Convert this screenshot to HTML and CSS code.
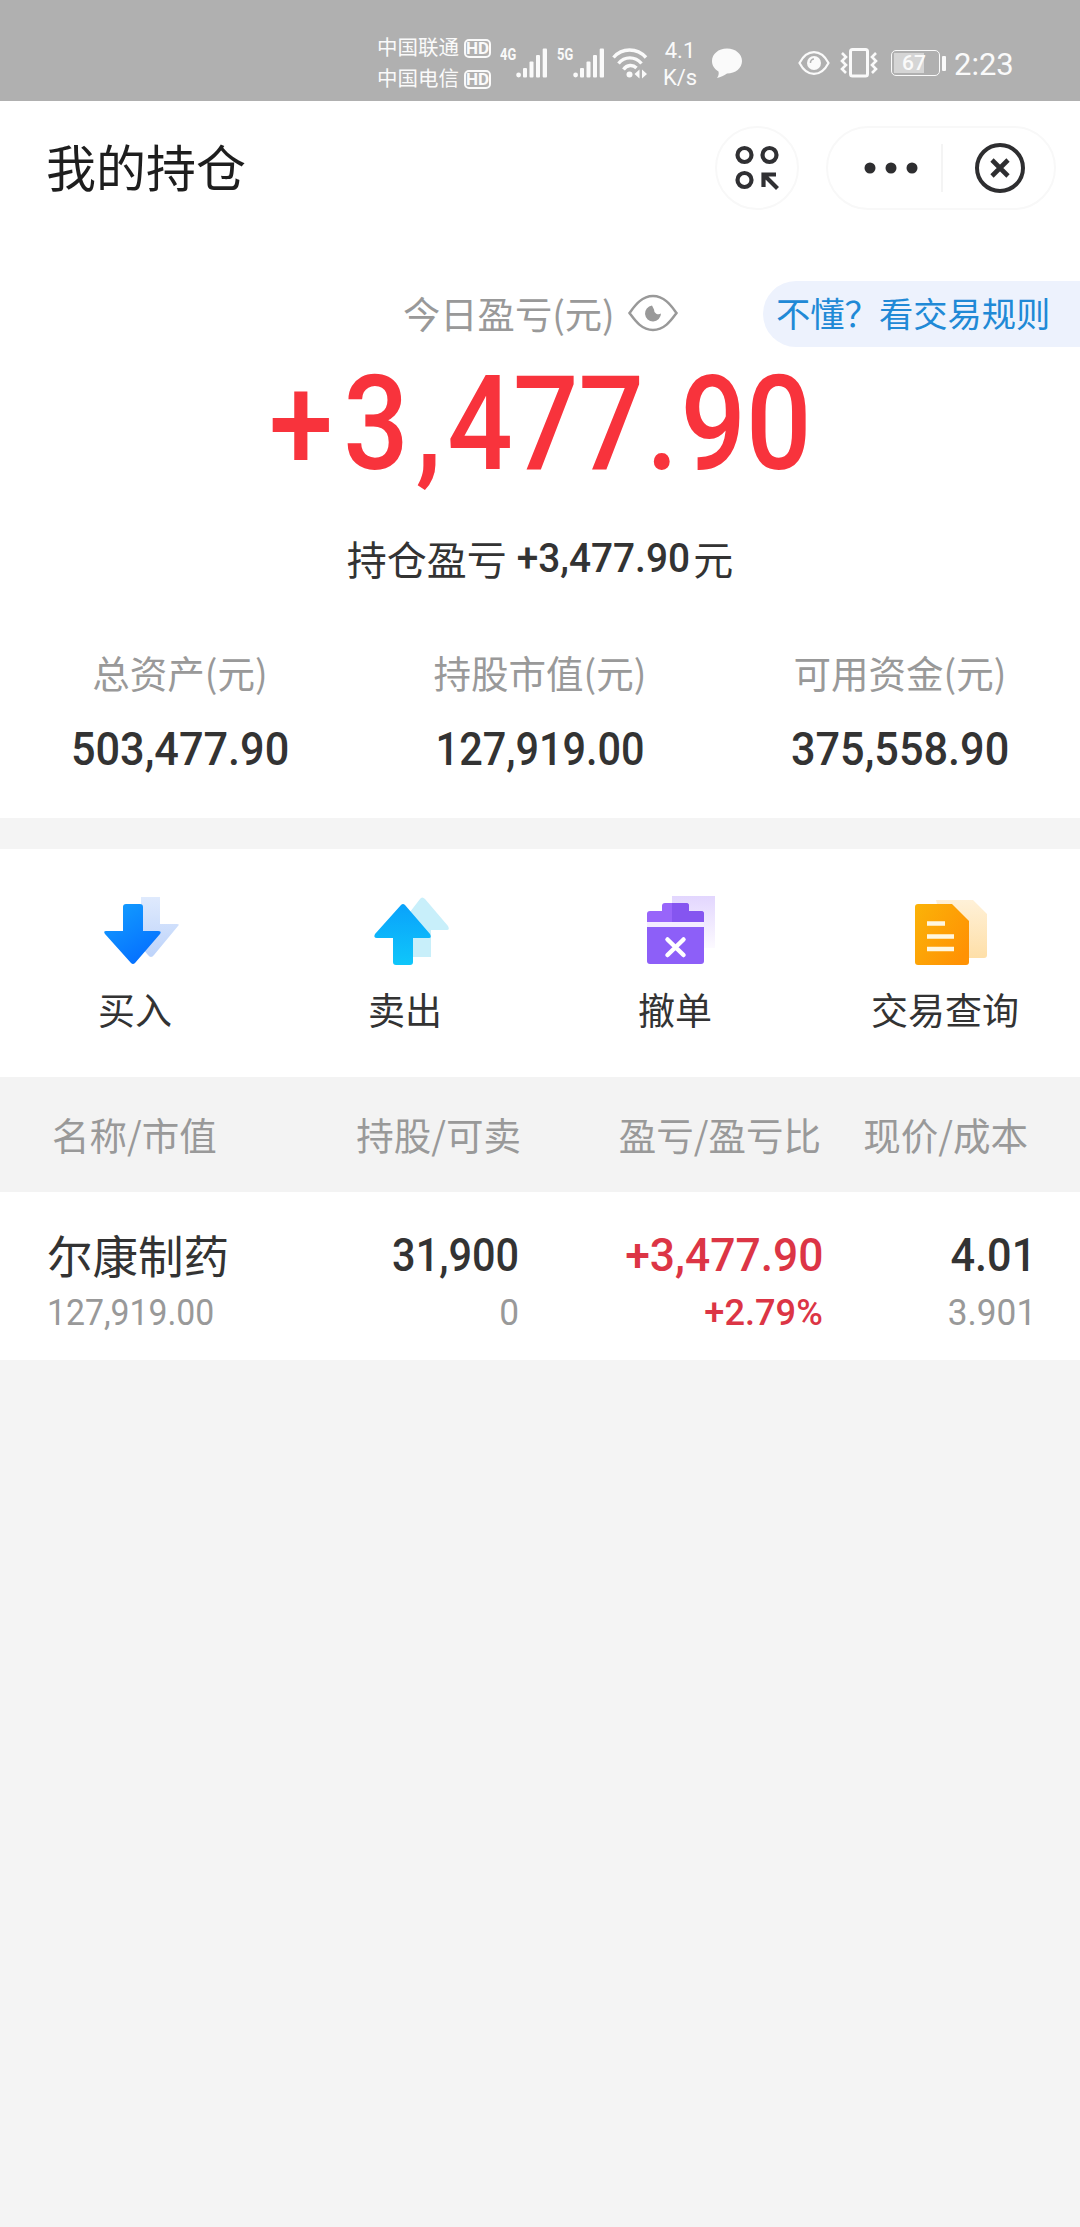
FILE: index.html
```html
<!DOCTYPE html>
<html lang="zh-CN">
<head>
<meta charset="utf-8">
<title>我的持仓</title>
<link rel="stylesheet" href="styles.css">
</head>
<body>
<div class="status">
  <div class="carriers">
    <div class="carrier"><span>中国联通</span><b class="hd">HD</b></div>
    <div class="carrier"><span>中国电信</span><b class="hd">HD</b></div>
  </div>
  <div class="signal">
    <span class="gen">4G</span>
    <svg width="32" height="30" viewBox="0 0 32 30" fill="#fafafa"><circle cx="2.6" cy="27" r="2.4"/><rect x="7" y="20" width="4" height="9.5" rx="1"/><rect x="13.500" y="13.500" width="4" height="16" rx="1"/><rect x="20" y="7" width="4" height="22.500" rx="1"/><rect x="26.700" y="0.500" width="4.300" height="29" rx="1"/></svg>
  </div>
  <div class="signal second">
    <span class="gen">5G</span>
    <svg width="32" height="30" viewBox="0 0 32 30" fill="#fafafa"><circle cx="2.6" cy="27" r="2.4"/><rect x="7" y="20" width="4" height="9.5" rx="1"/><rect x="13.500" y="13.500" width="4" height="16" rx="1"/><rect x="20" y="7" width="4" height="22.500" rx="1"/><rect x="26.700" y="0.500" width="4.300" height="29" rx="1"/></svg>
  </div>
  <svg class="wifi" width="37" height="30" viewBox="0 0 37 30" fill="none" stroke="#fafafa" stroke-width="3.400"><path d="M1.500 9.500C10-0.500 25-0.500 34 9.500M6.500 15.500C12.500 8 23 8 29.500 15.500M11.500 21.500C15 16.500 21 16.500 24.500 20"/><circle cx="17.500" cy="26.500" r="3" fill="#fafafa" stroke="none"/><path d="M27.500 21.500l-5 4.500 5 4.500zM30 21.500l5 4.500-5 4.500z" fill="#fafafa" stroke="none"/></svg>
  <div class="speed"><span>4.1</span><span>K/s</span></div>
  <svg class="bubble" width="32" height="31" viewBox="0 0 32 31" fill="#fafafa"><path d="M16 0.500C24.500 0.500 31 6 31 13S24.500 25.500 16 25.500C13 27.500 9.500 29.500 6 30 7.500 28 8 26 7.500 23.500 3.500 21 1 17.500 1 13 1 6 7.500 0.500 16 0.500z"/></svg>
  <svg class="eye-sm" width="32" height="26" viewBox="0 0 32 26"><path d="M1.500 13C9-1.500 23-1.500 30.500 13 23 27.500 9 27.500 1.500 13z" fill="none" stroke="#fafafa" stroke-width="2.200"/><circle cx="16" cy="13" r="7" fill="#fafafa"/><path d="M16 9a3.500 3.500 0 0 0-3.500 4" stroke="#b0b0b0" stroke-width="1.500" fill="none"/></svg>
  <svg class="vibrate" width="38" height="30" viewBox="0 0 38 30" fill="none" stroke="#fafafa"><rect x="10.500" y="1.500" width="17" height="26.500" rx="2" stroke-width="3"/><path d="M2 5l4 4-4 4 4 4-4 4 4 4M36 5l-4 4 4 4-4 4 4 4-4 4" stroke-width="2.600"/></svg>
  <div class="battery"><span class="cell"><span class="level"></span><span class="pct">67</span></span><span class="cap"></span></div>
  <span class="time">2:23</span>
</div>

<header class="nav">
  <h1>我的持仓</h1>
  <div class="round">
    <svg width="46" height="46" viewBox="0 0 46 46" fill="none" stroke="#303033" stroke-width="4.200"><circle cx="10.500" cy="10" r="7"/><circle cx="35.500" cy="10" r="7"/><circle cx="10.500" cy="35" r="7"/><path d="M29.500 42V29.500H42M30 30l13.500 13.500"/></svg>
  </div>
  <div class="capsule">
    <svg width="56" height="12" viewBox="0 0 56 12" fill="#2e2e30"><circle cx="7" cy="6" r="5.500"/><circle cx="28" cy="6" r="5.500"/><circle cx="49" cy="6" r="5.500"/></svg>
    <i></i>
    <svg width="52" height="52" viewBox="0 0 52 52" fill="none" stroke="#2e2e30" stroke-width="4"><circle cx="26" cy="26" r="23"/><path d="M18 18l16 16M34 18L18 34" stroke-width="4.600"/></svg>
  </div>
</header>

<section class="summary">
  <div class="today">
    <span>今日盈亏(元)</span>
    <svg width="50" height="38" viewBox="0 0 50 38"><path d="M1.500 19C6 13 13 2 25 2S44 13 48.500 19C44 25 37 36 25 36S6 25 1.500 19z" fill="none" stroke="#999" stroke-width="2.500"/><path d="M24 11.500a8 8 0 1 0 9 8 4.500 4.500 0 0 1-7-4z" fill="#999"/></svg>
  </div>
  <a class="rules">不懂？看交易规则</a>
  <div class="big"><span class="num"><i class="plus">+</i>3<i class="comma">,</i>477<i class="dot">.</i>90</span></div>
  <div class="hold"><span>持仓盈亏</span><span class="num">+3,477.90</span><span>元</span></div>
  <div class="totals">
    <div><label>总资产(元)</label><span class="num">503,477.90</span></div>
    <div><label>持股市值(元)</label><span class="num ones">127,919.00</span></div>
    <div><label>可用资金(元)</label><span class="num">375,558.90</span></div>
  </div>
</section>

<nav class="actions">
  <a>
    <svg width="90" height="76" viewBox="0 0 90 76"><defs><linearGradient id="buy" x1="0" y1="0" x2="0.600" y2="1"><stop offset="0" stop-color="#14a0ff"/><stop offset="1" stop-color="#0570ff"/></linearGradient><linearGradient id="buy2" x1="0" y1="0" x2="0" y2="1"><stop offset="0" stop-color="#dfeafd"/><stop offset="1" stop-color="#bdd3fa"/></linearGradient></defs><path d="M51 5h19v27h17q3 0 1 2L64 63q-3 4-6 0L33 34V30H51z" fill="url(#buy2)"/><path d="M36 12h14q3 0 3 3v24h15q4 0 2 3L45 71q-2 2-4 0L15 42q-2-3 1-3h17V15q0-3 3-3z" fill="url(#buy)"/></svg>
    <span>买入</span>
  </a>
  <a>
    <svg width="90" height="76" viewBox="0 0 90 76"><defs><linearGradient id="sell" x1="0" y1="0" x2="0" y2="1"><stop offset="0" stop-color="#0aa2fb"/><stop offset="1" stop-color="#0fc6fa"/></linearGradient></defs><path d="M60 7q2-3 5 0L88 34q2 4-1 4H71v27H50V20z" fill="#c8effa"/><path d="M41 13q2-2 4 0L70 42q2 4-1 4H53v24q0 3-3 3H36q-3 0-3-3V46H17q-4 0-2-4z" fill="url(#sell)"/></svg>
    <span>卖出</span>
  </a>
  <a>
    <svg width="90" height="76" viewBox="0 0 90 76"><defs><linearGradient id="glass" x1="0" y1="0" x2="0" y2="1"><stop offset="0" stop-color="#e2d6fe"/><stop offset="1" stop-color="#fcfaff"/></linearGradient></defs><path d="M42 4h43v52H42z" fill="url(#glass)"/><path d="M17 30V22q0-3 3-3h12v-5q0-3 3-3h21q3 0 3 3v5h12q3 0 3 3v8z" fill="#9865fa"/><path d="M42 11h14q3 0 3 3v5h12q3 0 3 3v8H42z" fill="#8555f0"/><path d="M17 35h57v34q0 3-3 3H20q-3 0-3-3z" fill="#8d5ff8"/><path d="M17 30h57v5H17z" fill="#f3ecff"/><path d="M37.500 47.500l16 15.500M53.500 47.500l-16 15.500" stroke="#fff" stroke-width="4.500" stroke-linecap="round"/></svg>
    <span>撤单</span>
  </a>
  <a>
    <svg width="90" height="76" viewBox="0 0 90 76"><defs><linearGradient id="doc" x1="0" y1="0" x2="1" y2="0.700"><stop offset="0" stop-color="#fbb308"/><stop offset="1" stop-color="#ff9204"/></linearGradient><linearGradient id="doc2" x1="0" y1="0" x2="0" y2="1"><stop offset="0" stop-color="#fff1d8"/><stop offset="1" stop-color="#fedfa8"/></linearGradient></defs><path d="M36 8h37l14 14v41q0 3-3 3H50z" fill="url(#doc2)"/><path d="M18 12h34l17 17v41q0 3-3 3H18q-3 0-3-3V15q0-3 3-3z" fill="url(#doc)"/><path d="M27 31.500h18M27 44.500h27M27 57h27" stroke="#fff7e0" stroke-width="4.500"/></svg>
    <span>交易查询</span>
  </a>
</nav>

<div class="row thead">
  <span>名称/市值</span><span>持股/可卖</span><span>盈亏/盈亏比</span><span>现价/成本</span>
</div>
<div class="row stock">
  <div><span class="name">尔康制药</span><span class="num sub ones">127,919.00</span></div>
  <div><span class="num ones">31,900</span><span class="num sub">0</span></div>
  <div class="up"><span class="num">+3,477.90</span><span class="num sub">+2.79%</span></div>
  <div><span class="num">4.01</span><span class="num sub">3.901</span></div>
</div>
</body>
</html>
```
FILE: styles.css
```css
* { box-sizing: border-box; }
body {
  margin: 0;
  width: 1080px;
  min-height: 2227px;
  background: #f4f4f4;
  color: #333;
  font-family: "Noto Sans CJK SC", sans-serif;
}
svg { display: block; flex: none; overflow: visible; }
span { white-space: nowrap; }

/* Condensed figures used for every amount */
.num {
  display: inline-block;
  font-family: Roboto, sans-serif;
  font-weight: 500;
  transform: scaleX(.94);
}
.num.ones { transform: scaleX(.9); }

.status {
  display: flex;
  height: 101px;
  padding: 25px 0 0 377px;
  background: #b0b0b0;
  color: #fafafa;
  font-family: Roboto, "Noto Sans CJK SC", sans-serif;
}
.carriers { width: 123px; padding-top: 8px; }
.carrier { display: flex; align-items: center; height: 31px; font-size: 20.500px; line-height: 31px; }
.hd {
  width: 27px;
  height: 19px;
  margin-left: 5px;
  border: 2px solid #fafafa;
  border-radius: 5px;
  font-size: 17px;
  line-height: 15.500px;
  text-align: center;
}
.signal { display: flex; width: 57px; padding-top: 23px; }
.gen { width: 16px; font-size: 16.500px; font-weight: 700; line-height: 14px; transform: scaleX(.78); transform-origin: left; }
.wifi { margin: 23px 0 0 -2px; }
.speed { display: flex; flex-direction: column; width: 62px; padding-top: 13px; font-size: 22px; line-height: 26.500px; text-align: center; }
.bubble { margin-top: 23px; }
.eye-sm { margin: 25px 0 0 55px; }
.vibrate { margin: 23px 0 0 10px; }
.battery { display: flex; align-items: center; gap: 2px; height: 26px; margin: 25px 0 0 13px; }
.cell { display: flex; width: 49px; height: 26px; padding: 2px; border: 1.500px solid #fafafa; border-radius: 5px; }
.level { width: 30px; background: #d5d5d5; }
.pct { width: 44px; margin-left: -32px; font-size: 21px; font-weight: 500; line-height: 21px; text-align: center; }
.cap { width: 4px; height: 15px; background: #fafafa; border-radius: 1px; }
.time { margin: 22px 0 0 8px; font-size: 31px; line-height: 36px; }

.nav { display: flex; align-items: center; height: 135px; padding: 0 24px 2px 46px; background: #fff; }
.nav h1 { flex: 1; margin: -6px 0 0; font-size: 50px; font-weight: 400; line-height: 60px; color: #1e1e1e; }
.round { display: flex; align-items: center; justify-content: center; width: 84px; height: 84px; margin-right: 27px; border: 2px solid #f8f8f8; border-radius: 50%; }
.capsule { display: flex; align-items: center; width: 230px; height: 84px; padding-left: 35px; border: 2px solid #f8f8f8; border-radius: 42px; }
.capsule i { width: 2px; height: 48px; margin: 0 31px 0 22px; background: #f4f4f4; }

.summary {
  display: grid;
  grid-template-columns: 403px 1fr 317px;
  grid-template-rows: 156px 119px 94px 213px;
  height: 582px;
  background: #fff;
}
.today { grid-column: 2; display: flex; align-items: center; gap: 13px; height: 154px; color: #999; font-size: 37.300px; }
.rules {
  grid-column: 3;
  align-self: center;
  height: 66px;
  padding-left: 13px;
  border-radius: 33px 0 0 33px;
  background: #edf2fd;
  color: #2089d6;
  font-size: 34.300px;
  line-height: 63px;
  white-space: nowrap;
}
.big { grid-column: 1 / 4; margin-top: -13px; text-align: center; color: #f8333c; font-size: 131px; line-height: 66px; }
.big .num { transform: scaleX(.88); }
.big i { font-style: normal; }
.big .plus { margin-right: .09em; }
.big .comma { margin: 0 .05em 0 .06em; }
.big .dot { margin: 0 .02em; }
.hold { grid-column: 1 / 4; display: flex; justify-content: center; align-items: center; font-size: 40px; }
.hold .num { margin: 0 1px 0 7px; transform: scaleX(.97); }
.totals { grid-column: 1 / 4; display: grid; grid-template-columns: repeat(3, 360px); padding-top: 40px; text-align: center; }
.totals label { display: block; margin-bottom: 20px; color: #999; font-size: 37.500px; line-height: 54px; }
.totals .num { font-size: 46px; line-height: 60px; }

.actions { display: grid; grid-template-columns: repeat(4, 270px); height: 228px; margin-top: 31px; padding-top: 43px; background: #fff; }
.actions a { display: flex; flex-direction: column; align-items: center; font-size: 37px; line-height: 54px; }
.actions span { margin-top: 14px; }

.row { display: grid; grid-template-columns: 218px 254px 304px 213px; padding: 0 47px; }
.row > :not(:first-child) { text-align: right; }
.thead { height: 115px; padding-left: 52px; grid-template-columns: 213px 256px 300px 207px; background: #f3f3f3; color: #999; font-size: 37.500px; line-height: 113px; }
.stock { height: 168px; padding-top: 35px; background: #fff; }
.stock > div { display: flex; flex-direction: column; align-items: flex-end; font-size: 46px; line-height: 56px; }
.stock > div:first-child { align-items: flex-start; }
.stock .num { transform-origin: right; }
.stock > div:first-child .num { transform-origin: left; }
.stock .name { font-size: 45.500px; line-height: 54px; margin-bottom: 2px; }
.stock .sub { color: #999; font-size: 37.500px; font-weight: 400; line-height: 58px; }
.stock .up, .stock .up .sub { color: #dc3545; }
.stock .up .num { transform: scaleX(.965); }
.stock .up .sub { font-weight: 500; }
```
